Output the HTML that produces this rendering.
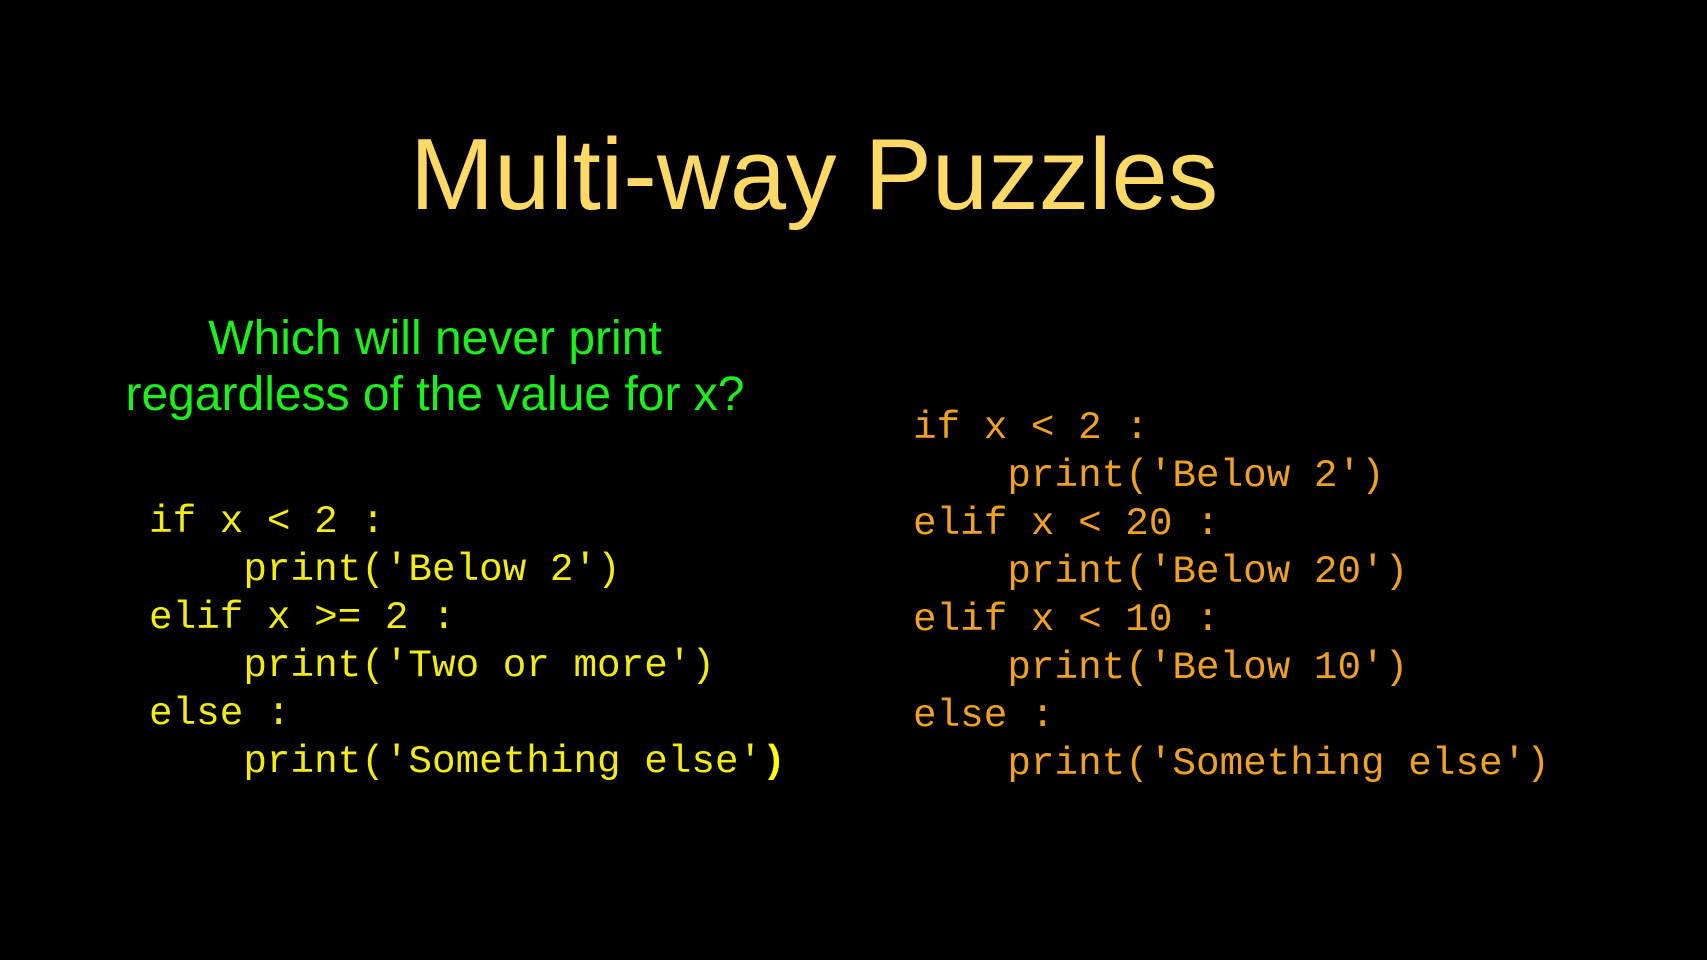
<!DOCTYPE html>
<html><head><meta charset="utf-8"><style>
html,body{margin:0;padding:0;background:#000;width:1707px;height:960px;overflow:hidden;position:relative}
.t{position:absolute;left:410px;top:119px;font:101px/112px "Liberation Sans",sans-serif;color:#ffd966;white-space:nowrap}
.g{position:absolute;left:0;width:870px;top:311px;font:48px/56px "Liberation Sans",sans-serif;color:#1cf01c;text-align:center}
.c{position:absolute;font:39.3px/48.1px "Liberation Mono",monospace;white-space:pre;margin:0}
.l{left:149px;top:497.5px;color:#f2ec10}
.r{left:913px;top:403.5px;color:#eea125}
</style></head><body>
<div class="t">Multi-way Puzzles</div>
<div class="g">Which will never print<br>regardless of the value for x?</div>
<pre class="c l">if x &lt; 2 :
    print('Below 2')
elif x &gt;= 2 :
    print('Two or more')
else :
    print('Something else'<b style="color:#ffff00">)</b></pre>
<pre class="c r">if x &lt; 2 :
    print('Below 2')
elif x &lt; 20 :
    print('Below 20')
elif x &lt; 10 :
    print('Below 10')
else :
    print('Something else')</pre>
</body></html>
